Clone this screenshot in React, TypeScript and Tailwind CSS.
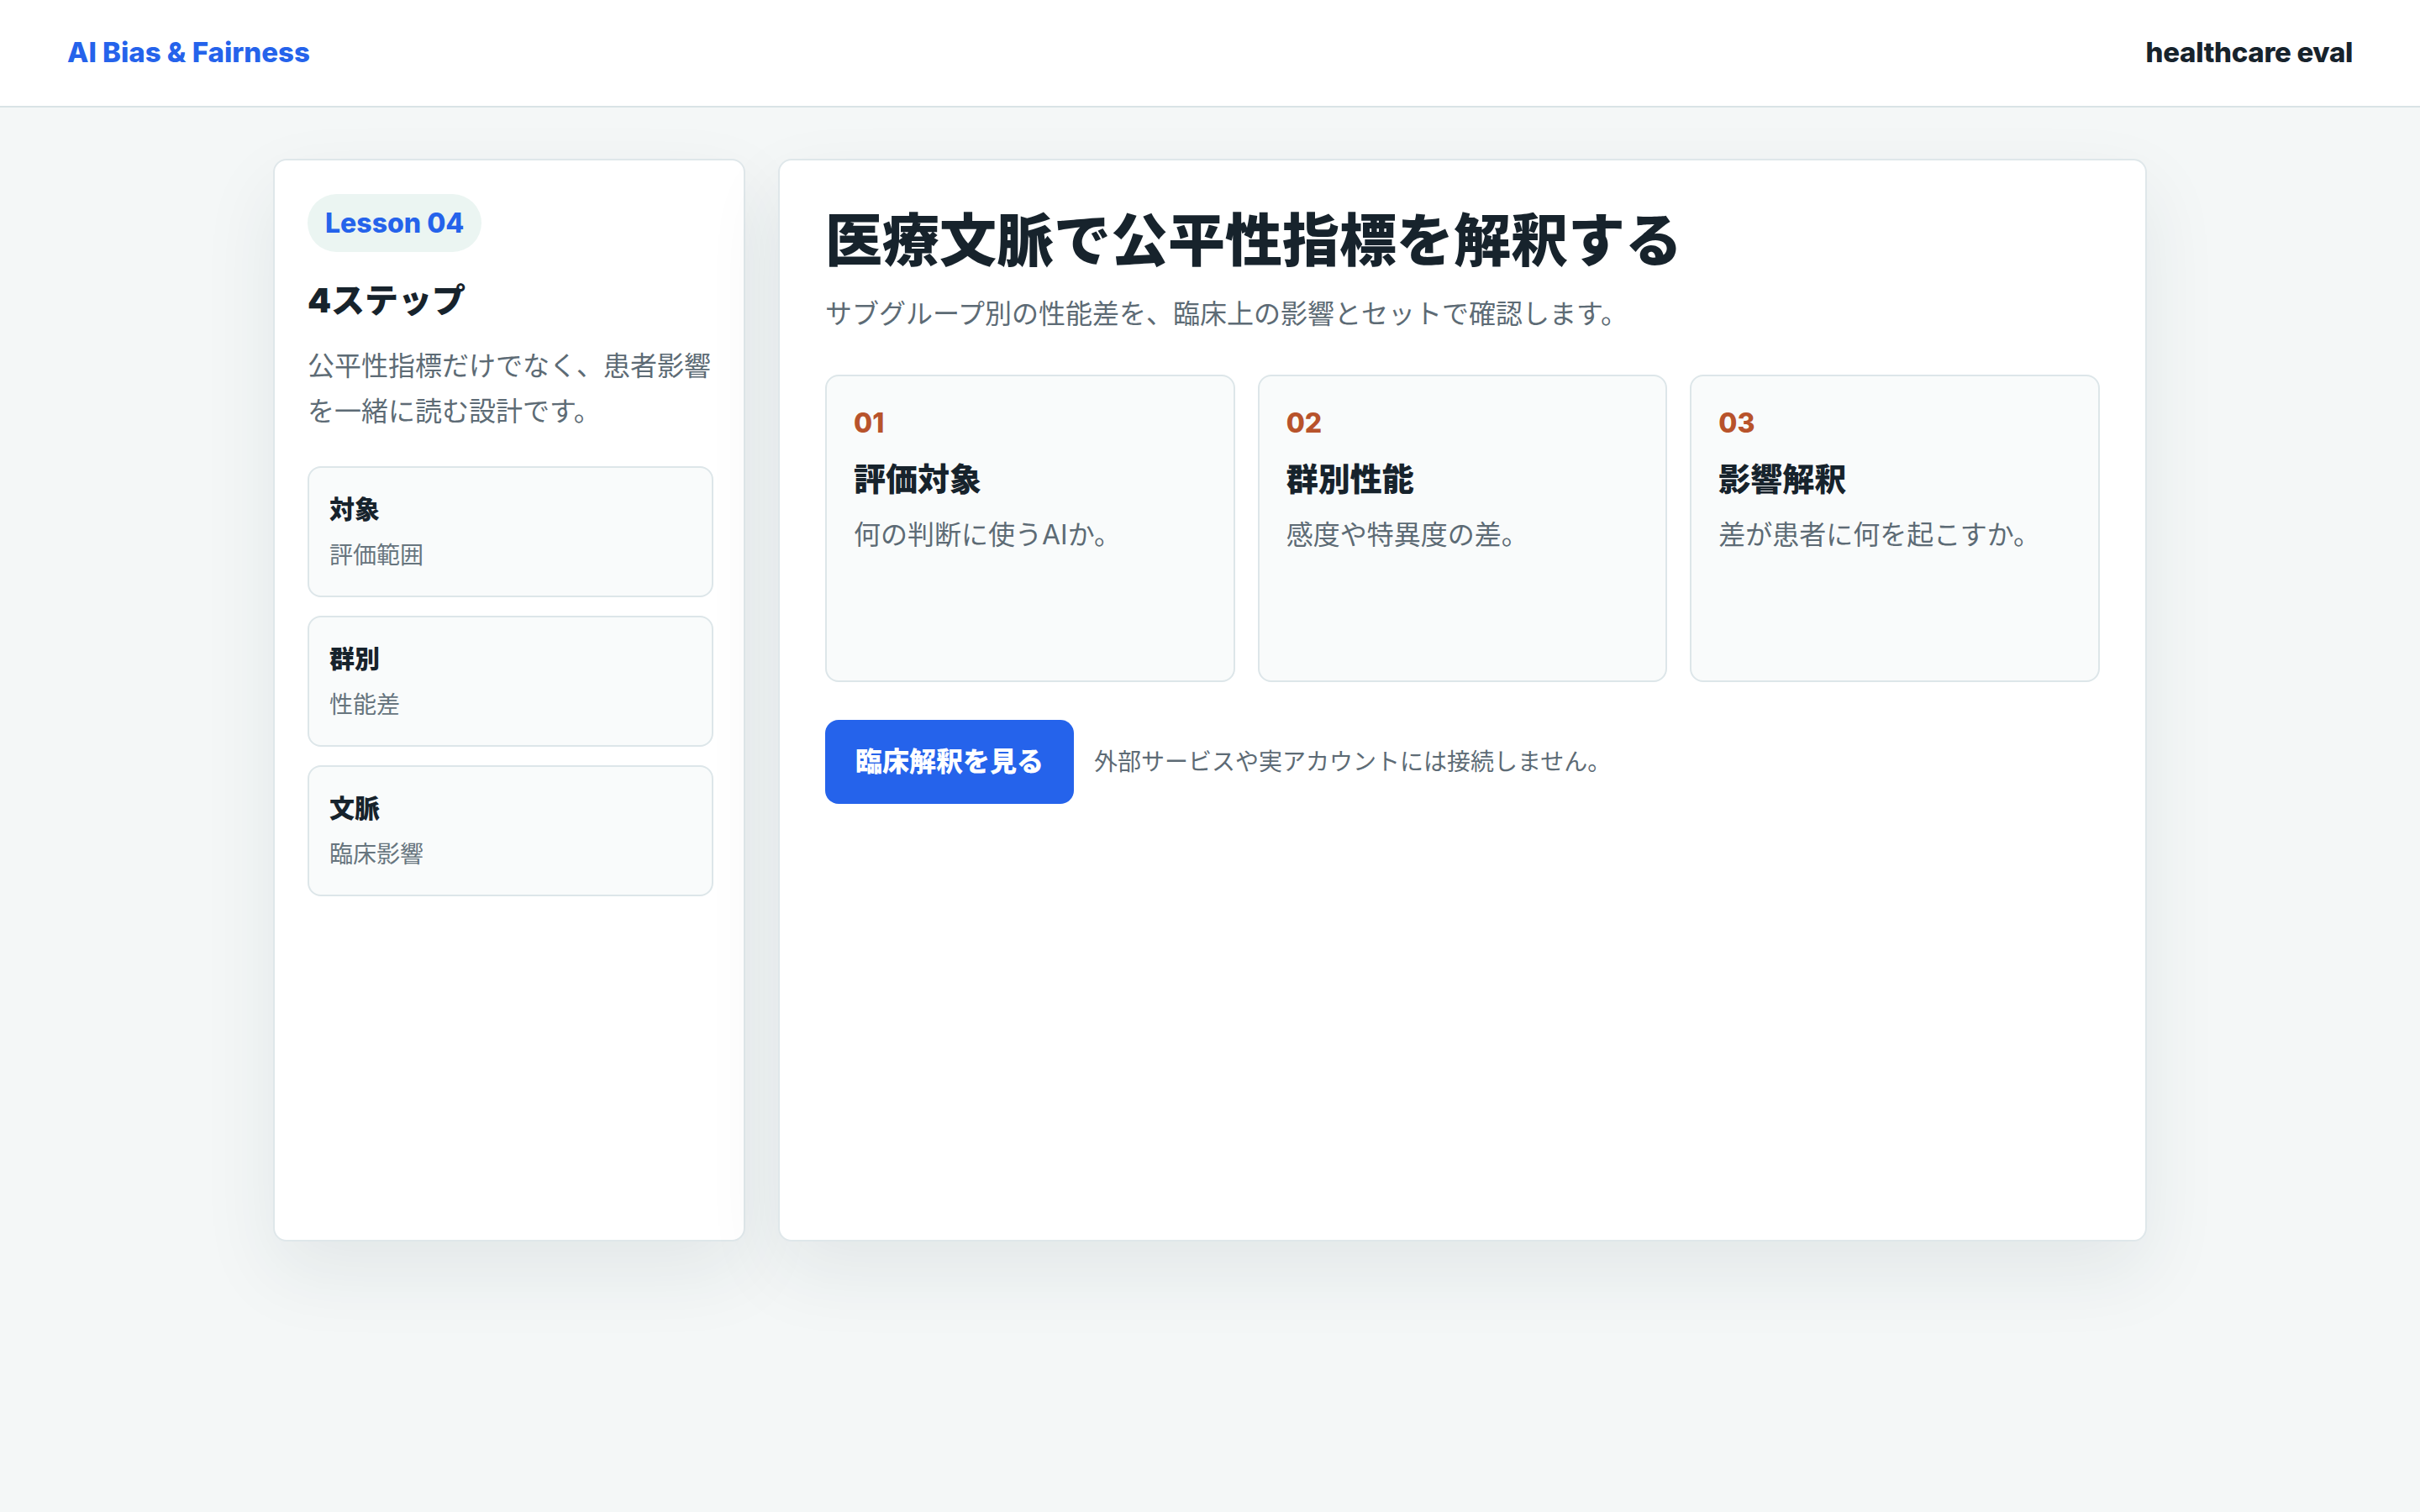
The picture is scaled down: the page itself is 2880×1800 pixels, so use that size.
const steps = [
  { no: "01", title: "評価対象", desc: "何の判断に使うAIか。" },
  { no: "02", title: "群別性能", desc: "感度や特異度の差。" },
  { no: "03", title: "影響解釈", desc: "差が患者に何を起こすか。" },
];

const outline = [
  { title: "対象", sub: "評価範囲" },
  { title: "群別", sub: "性能差" },
  { title: "文脈", sub: "臨床影響" },
];

export default function App() {
  return (
    <div className="min-h-screen bg-[#f4f7f7] font-['Inter','Noto_Sans_CJK_JP',sans-serif] text-[#17232c]">
      <header className="flex h-[128px] items-center justify-between border-b-2 border-[#d9e3e6] bg-white px-[80px]">
        <span className="text-[33px] font-extrabold text-[#2563eb]">AI Bias &amp; Fairness</span>
        <span className="text-[33px] font-extrabold tracking-[-0.01em]">healthcare eval</span>
      </header>

      <main className="pt-[61px] pb-[120px]">
        <div className="mx-auto grid h-[1289px] w-[2230px] grid-cols-[562px_1fr] gap-[39px]">
          <aside className="rounded-[16px] border-2 border-[#dfe7ea] bg-white pt-[40px] pl-[39px] pr-[36px] shadow-[0_36px_90px_rgba(30,50,60,0.08)]">
            <div className="inline-flex h-[69px] items-center rounded-full bg-[#ebf5f2] px-[21px] text-[32px] font-extrabold text-[#2563eb]">
              Lesson 04
            </div>
            <h2 className="mt-[30px] text-[40px] leading-[56px] font-black">4ステップ</h2>
            <p className="mt-[23px] text-[32px] leading-[54px] text-[#5d6b75]">
              公平性指標だけでなく、患者影響を一緒に読む設計です。
            </p>
            <div className="mt-[38px] flex flex-col gap-[22px]">
              {outline.map((o) => (
                <div
                  key={o.title}
                  className="rounded-[16px] border-2 border-[#dde6e9] bg-[#f9fbfb] px-[24px] py-[27px]"
                >
                  <div className="text-[30px] leading-[45px] font-black">{o.title}</div>
                  <div className="mt-[11px] text-[28px] leading-[42px] text-[#67757e]">{o.sub}</div>
                </div>
              ))}
            </div>
          </aside>

          <section className="rounded-[16px] border-2 border-[#dfe7ea] bg-white px-[54px] pt-[55px] shadow-[0_36px_90px_rgba(30,50,60,0.08)]">
            <h1 className="text-[68px] leading-[1.2] font-black">医療文脈で公平性指標を解釈する</h1>
            <p className="mt-[19px] text-[32px] leading-[54px] text-[#5d6b75]">
              サブグループ別の性能差を、臨床上の影響とセットで確認します。
            </p>

            <div className="mt-[45px] grid grid-cols-3 gap-[27px]">
              {steps.map((s) => (
                <div
                  key={s.no}
                  className="h-[366px] rounded-[16px] border-2 border-[#dde6e9] bg-[#f9fbfb] px-[32px] pt-[32px]"
                >
                  <div className="text-[32px] leading-[48px] font-extrabold text-[#b8532b]">{s.no}</div>
                  <div className="mt-[16px] text-[38px] leading-[53px] font-black">{s.title}</div>
                  <div className="mt-[13px] text-[32px] leading-[54px] text-[#5d6b75]">{s.desc}</div>
                </div>
              ))}
            </div>

            <div className="mt-[45px] flex items-center gap-[24px]">
              <button className="h-[100px] rounded-[16px] bg-[#2563eb] px-[36px] text-[32px] font-black text-white">
                臨床解釈を見る
              </button>
              <span className="text-[28px] text-[#5d6b75]">外部サービスや実アカウントには接続しません。</span>
            </div>
          </section>
        </div>
      </main>
    </div>
  );
}
